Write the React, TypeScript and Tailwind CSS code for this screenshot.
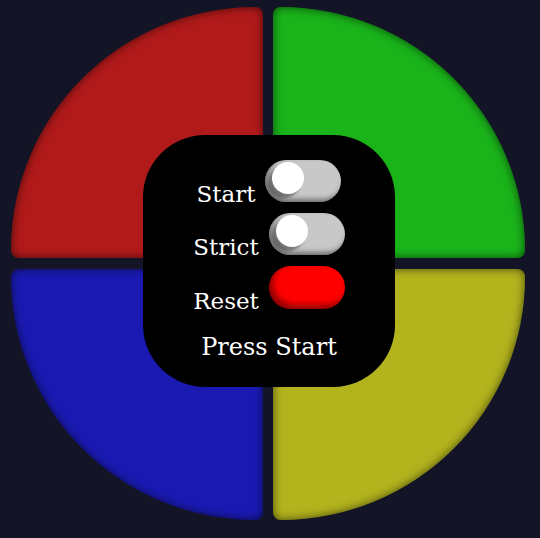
import React from "react";

function Toggle() {
  return (
    <span className="relative ml-[10px] inline-block h-[42px] w-[76px] rounded-full bg-[#c8c8c8] align-baseline shadow-[inset_3px_-3px_5px_rgba(0,0,0,0.45)]">
      <span className="absolute left-[7px] top-[2px] h-[32px] w-[32px] rounded-full bg-white shadow-[-4px_4px_3px_rgba(0,0,0,0.4)]" />
    </span>
  );
}

function ResetButton() {
  return (
    <span className="relative ml-[10px] inline-block h-[43px] w-[76px] rounded-full bg-[#ff0000] align-baseline shadow-[inset_4px_-4px_6px_rgba(0,0,0,0.45)]" />
  );
}

export default function App() {
  return (
    <div
      className="min-h-screen w-full bg-[#131526] pl-[11px] pt-[7px]"
      style={{ fontFamily: '"DejaVu Serif", serif' }}
    >
      <div className="relative grid w-[514px] grid-cols-[252px_252px] grid-rows-[251px_251px] gap-x-[10px] gap-y-[11px]">
        <div className="rounded-[8px] rounded-tl-[100%] bg-[#b11a1a] shadow-[inset_0_0_10px_rgba(0,0,0,0.6)]" />
        <div className="rounded-[8px] rounded-tr-[100%] bg-[#1ab31a] shadow-[inset_0_0_10px_rgba(0,0,0,0.6)]" />
        <div className="rounded-[8px] rounded-bl-[100%] bg-[#1a1ab3] shadow-[inset_0_0_10px_rgba(0,0,0,0.6)]" />
        <div className="rounded-[8px] rounded-br-[100%] bg-[#b3b31e] shadow-[inset_0_0_10px_rgba(0,0,0,0.6)]" />

        <div className="absolute left-[132px] top-[128px] h-[252px] w-[252px] rounded-[62px] bg-black pt-[25px] text-[23px] text-white">
          <div className="h-[53px] text-center leading-none">
            Start
            <Toggle />
          </div>
          <div className="h-[53px] text-center leading-none">
            Strict
            <Toggle />
          </div>
          <div className="h-[53px] text-center leading-none">
            Reset
            <ResetButton />
          </div>
          <div className="mt-[16px] text-center text-[24px] leading-none">Press Start</div>
        </div>
      </div>
    </div>
  );
}
